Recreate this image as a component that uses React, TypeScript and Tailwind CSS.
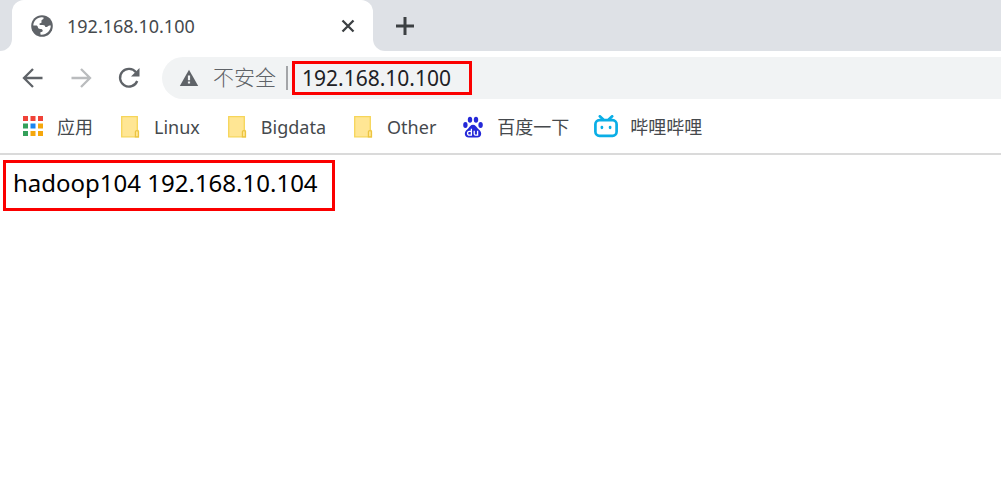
import { useState } from 'react'
import type { ReactNode } from 'react'
import { clsx } from 'clsx'

type Bookmark = { label: string; icon: ReactNode }

const APP_COLORS = [
  '#f04238', '#f04238', '#f04238',
  '#34a05a', '#1a84f0', '#f5a70c',
  '#34a05a', '#f5a70c', '#f5a70c',
]

function GlobeIcon() {
  return (
    <svg viewBox="0 0 22 22" className="h-[22px] w-[22px] shrink-0" aria-hidden>
      <circle cx="11" cy="11" r="10.8" fill="#5f6368" />
      <path
        d="M2.300 10.600C2.300 6 6 2.300 10.800 2.200l1.700.2c.3.900-.1 1.600-1 2.100-1 .6-1.300 1.200-1 2.100.3 1-.2 1.600-1.300 1.700-.9.1-1 1-.3 1.600h3c1.600 0 2.300.8 2.400 2.200h1.300c1.200 0 1.500-1.600 2.900-1.600h1.300c0 5-4 9.200-9.200 9.200l-1.200-.1v-2.300c1.600 0 2.300-.6 2.300-1.700 0-1.200-.9-1.700-2.300-1.700-1.700 0-2.200-.5-2.500-1.700-.2-1-.8-1.600-1.900-1.600z"
        fill="#fff"
      />
    </svg>
  )
}

function ArrowIcon({ flip = false }: { flip?: boolean }) {
  return (
    <svg
      viewBox="0 0 22 22"
      className={clsx('h-[22px] w-[22px]', flip && '-scale-x-100')}
      fill="none"
      stroke="currentColor"
      strokeWidth="2.300"
      aria-hidden
    >
      <path d="M20.500 11H2.500M11 2 2 11l9 9" />
    </svg>
  )
}

function ReloadIcon() {
  return (
    <svg viewBox="0 0 22 22" className="h-[22px] w-[22px]" aria-hidden>
      <path
        d="M18 5.300A8.900 8.900 0 1 0 19.200 14"
        fill="none"
        stroke="currentColor"
        strokeWidth="2.300"
      />
      <path d="M21.500 1v8.500H13z" fill="currentColor" />
    </svg>
  )
}

function WarningIcon() {
  return (
    <svg viewBox="0 0 20 18" className="h-[18px] w-5 shrink-0" aria-hidden>
      <path d="M10 .8 19.200 17H.8z" fill="#5f6368" />
      <path d="M8.900 6.500h2.200v4.700H8.900zM8.900 12.400h2.200v2.200H8.900z" fill="#f1f3f4" />
    </svg>
  )
}

function AppsIcon() {
  return (
    <svg viewBox="0 0 24 24" className="h-6 w-6 shrink-0" aria-hidden>
      {APP_COLORS.map((color, i) => (
        <rect
          key={i}
          x={(i % 3) * 7.5 + 2}
          y={Math.floor(i / 3) * 7.5 + 1}
          width="5"
          height="5"
          fill={color}
        />
      ))}
    </svg>
  )
}

function FolderIcon() {
  return (
    <svg viewBox="0 0 24 24" className="h-6 w-6 shrink-0" aria-hidden>
      <path d="M3.700 1.700h15.600v13l1.200 1.500v5.600H3.700z" fill="#ffe694" stroke="#f6d559" strokeWidth="1.300" />
      <path d="M17.400 21.800v-5c0-1.700 3-1.700 3 0v5z" fill="#ffe694" stroke="#ecc440" strokeWidth="1.200" />
    </svg>
  )
}

function BaiduIcon() {
  return (
    <svg viewBox="-2 -1.500 24 24" className="h-6 w-6 shrink-0" aria-hidden>
      <g fill="#2529d8">
        <ellipse cx="2.400" cy="8.500" rx="2.200" ry="2.900" />
        <ellipse cx="7" cy="3.300" rx="2.200" ry="3" />
        <ellipse cx="13" cy="3.300" rx="2.200" ry="3" />
        <ellipse cx="17.600" cy="8.500" rx="2.200" ry="2.900" />
        <path d="M10 8.300c2.300 0 3.300 2 4.600 3.400 1.500 1.600 3.600 2.900 3.600 5.500 0 2.300-1.600 3.700-4 3.700H5.800c-2.400 0-4-1.400-4-3.700 0-2.600 2.100-3.900 3.600-5.500C6.700 10.300 7.700 8.300 10 8.300z" />
      </g>
      <g fill="none" stroke="#fff" strokeWidth="1.300">
        <path d="M8.400 12.200v6.500H6.200c-2.200 0-2.200-3.900 0-3.900h2.200M11.200 14.200v3c0 1 .5 1.500 1.300 1.500h2.100v-4.500" />
      </g>
    </svg>
  )
}

function BilibiliIcon() {
  return (
    <svg viewBox="0 0 24 24" className="h-6 w-6 shrink-0" aria-hidden>
      <g fill="none" stroke="#0aaee6" strokeWidth="2.700" strokeLinecap="round">
        <rect x="1.400" y="5.200" width="21.200" height="15.600" rx="4" />
        <path d="m5.800 1.300 3.200 3M18.200 1.300l-3.200 3" />
        <path d="M7.900 12v.8M16.100 12v.8" />
      </g>
    </svg>
  )
}

const BOOKMARKS: Bookmark[] = [
  { label: '应用', icon: <AppsIcon /> },
  { label: 'Linux', icon: <FolderIcon /> },
  { label: 'Bigdata', icon: <FolderIcon /> },
  { label: 'Other', icon: <FolderIcon /> },
  { label: '百度一下', icon: <BaiduIcon /> },
  { label: '哔哩哔哩', icon: <BilibiliIcon /> },
]

function TabStrip() {
  return (
    <div className="flex h-[51px] items-stretch bg-[#dee1e6]">
      <div className="w-3 bg-white">
        <div className="h-full rounded-br-xl bg-[#dee1e6]" />
      </div>
      <div className="flex w-[361px] items-center rounded-t-xl bg-white pl-[19px] pr-[15px]">
        <GlobeIcon />
        <span className="ml-3.5 flex-1 text-lg text-[#45494d]">192.168.10.100</span>
        <button type="button" aria-label="Close tab" className="grid h-5 w-5 place-items-center text-[#3c4043]">
          <svg viewBox="0 0 14 14" className="h-3.5 w-3.5" stroke="currentColor" strokeWidth="2.300" aria-hidden>
            <path d="m1.500 1.500 11 11M12.500 1.500l-11 11" />
          </svg>
        </button>
      </div>
      <div className="flex flex-1 bg-white">
        <div className="flex flex-1 items-center rounded-bl-xl bg-[#dee1e6] pl-[22px]">
          <button type="button" aria-label="New tab" className="grid h-5 w-5 place-items-center text-[#3c4043]">
            <svg viewBox="0 0 20 20" className="h-5 w-5" stroke="currentColor" strokeWidth="3" aria-hidden>
              <path d="M10 1v18M1 10h18" />
            </svg>
          </button>
        </div>
      </div>
    </div>
  )
}

function Toolbar() {
  const [address, setAddress] = useState('192.168.10.100')

  return (
    <div className="flex h-[54px] items-center pl-[22px]">
      <div className="flex gap-[26px] text-[#5f6368]">
        <button type="button" aria-label="Back">
          <ArrowIcon />
        </button>
        <button type="button" aria-label="Forward" disabled className="text-[#babcbe]">
          <ArrowIcon flip />
        </button>
        <button type="button" aria-label="Reload">
          <ReloadIcon />
        </button>
      </div>
      <div className="ml-[22px] flex h-[42px] flex-1 items-center rounded-l-full bg-[#f1f3f4] pl-[17px]">
        <button type="button" className="flex items-center gap-3.5 text-[21px] font-light text-[#5f6368]">
          <WarningIcon />
          不安全
        </button>
        <span className="ml-2.5 h-6 w-0.5 bg-[#a3a5a8]" />
        <input
          type="text"
          aria-label="Address"
          value={address}
          onChange={(event) => setAddress(event.target.value)}
          className="ml-1 h-[34px] w-[180px] border-[3px] border-[#fb0000] bg-transparent px-[7px] text-[21px] text-[#202124] outline-none"
        />
      </div>
    </div>
  )
}

function BookmarkBar() {
  return (
    <nav className="flex h-[50px] items-center gap-[25px] border-b-2 border-[#dadada] pb-1 pl-[21px]">
      {BOOKMARKS.map(({ label, icon }) => (
        <a key={label} href="#" className="flex items-center gap-3 whitespace-nowrap text-lg text-[#45494d]">
          {icon}
          {label}
        </a>
      ))}
    </nav>
  )
}

export default function App() {
  return (
    <div className="min-h-screen bg-white font-['Noto_Sans','Noto_Sans_CJK_SC',sans-serif]">
      <header>
        <TabStrip />
        <Toolbar />
        <BookmarkBar />
      </header>
      <main className="px-[3px] pt-[5px]">
        <p className="w-fit border-[3px] border-[#fb0000] pt-0.5 pb-[7px] pl-[7px] pr-[14px] text-2xl leading-9 text-black">
          hadoop104 192.168.10.104
        </p>
      </main>
    </div>
  )
}
